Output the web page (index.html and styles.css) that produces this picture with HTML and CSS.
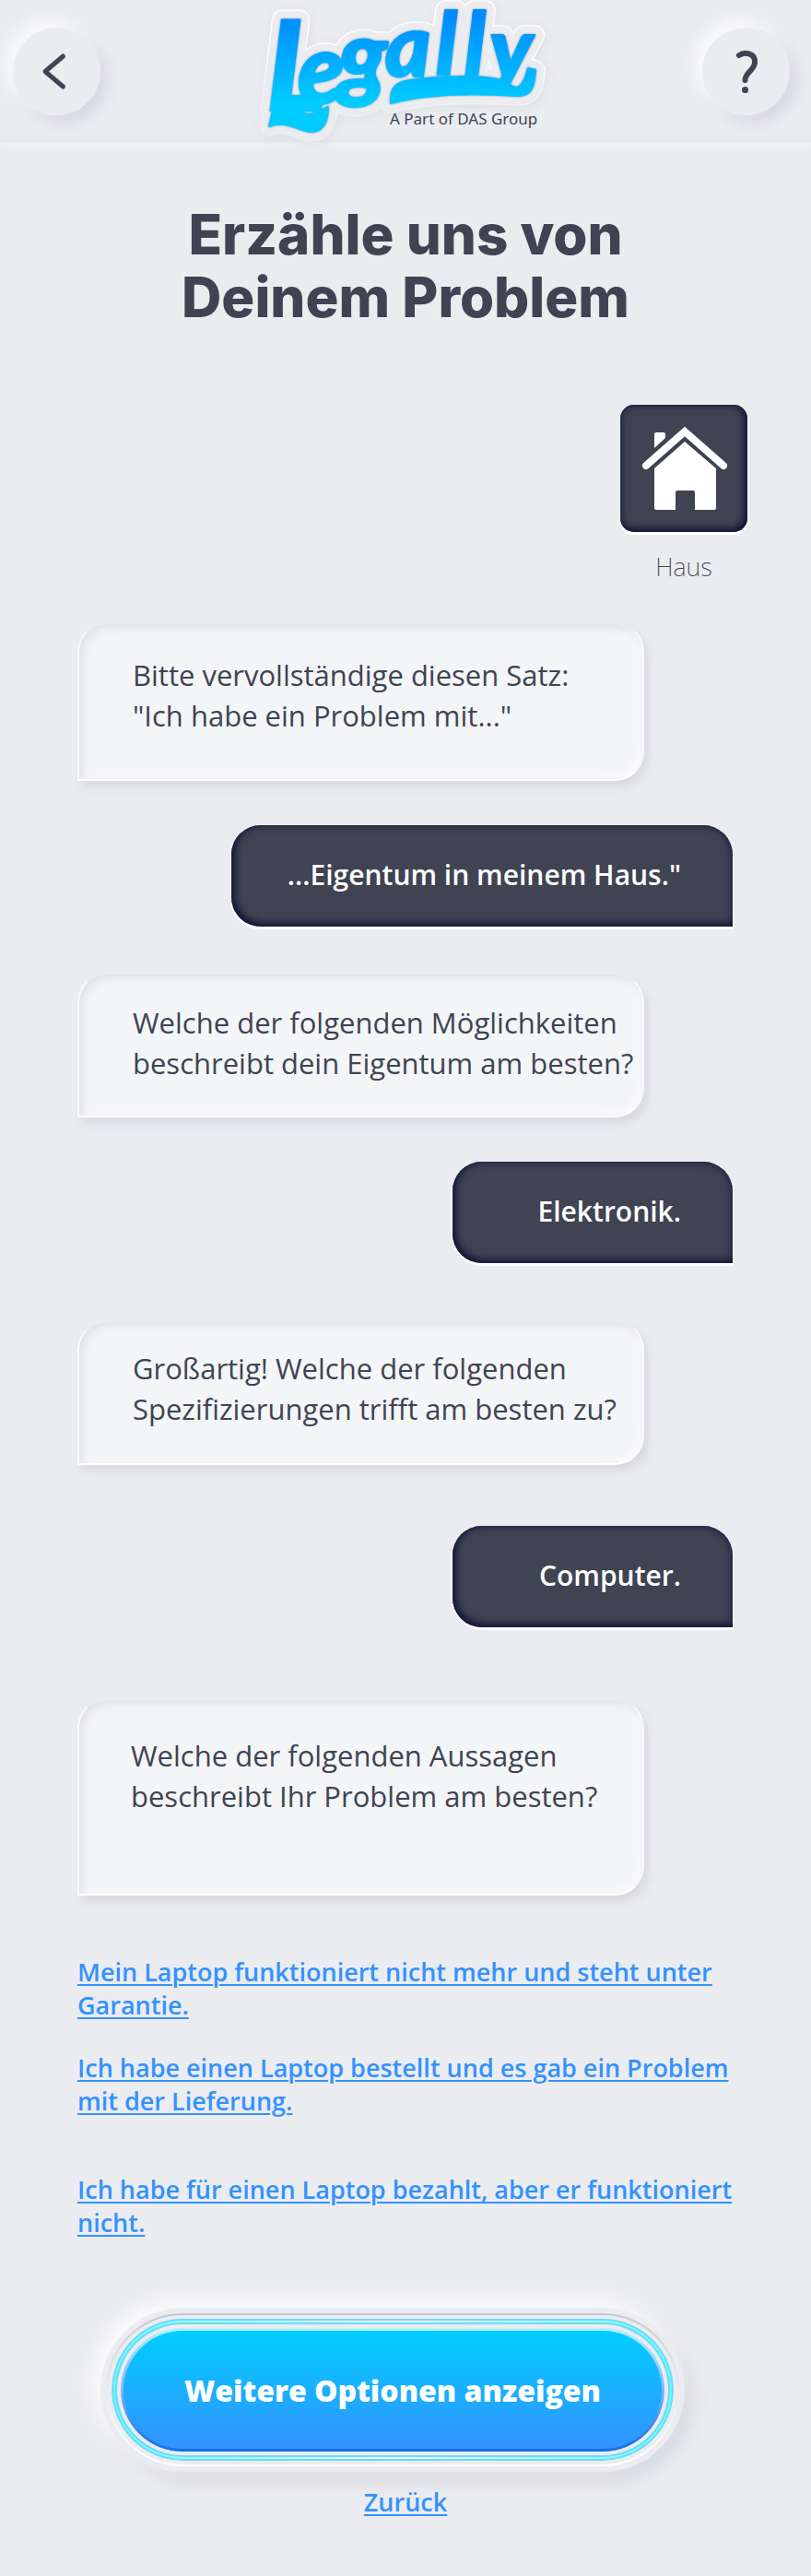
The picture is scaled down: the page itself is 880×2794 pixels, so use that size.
FILE: index.html
```html
<!DOCTYPE html>
<html lang="de">
<head>
<meta charset="utf-8">
<meta name="viewport" content="width=device-width, initial-scale=1">
<title>Legally – Erzähle uns von Deinem Problem</title>
<link rel="stylesheet" href="styles.css">
</head>
<body>
<header class="topbar">
  <button class="round-button" type="button" aria-label="Zurück">
    <svg class="round-icon" viewBox="0 0 95 95" aria-hidden="true"><path class="chevron" d="M54.500 31 L35 47.500 L54.500 64"/></svg>
  </button>
  <svg class="logo" viewBox="0 0 340 150" role="img" aria-label="Legally – A Part of DAS Group">
    <defs>
      <linearGradient id="ink" gradientUnits="userSpaceOnUse" x1="0" y1="18" x2="0" y2="112">
        <stop offset="0" stop-color="#008cff"/><stop offset="1" stop-color="#00ccff"/>
      </linearGradient>
      <linearGradient id="rim" gradientUnits="userSpaceOnUse" x1="0" y1="60" x2="0" y2="135">
        <stop offset="0" stop-color="#fdfdfe"/><stop offset="1" stop-color="#ebecf0"/>
      </linearGradient>
      <g id="mark">
        <text class="mark-text" font-size="136" x="19" y="120">L</text>
        <text class="mark-text" font-size="104" x="53 97" y="112 97">eg</text>
        <text class="mark-text" font-size="94" x="148 203 234 261" y="83 81 81 86">ally</text>
        <path d="M22 137 L27 116 H46 C56 120 58 124 66 124 C76 123 80 118 86 116 C86 134 79 143 68 143 C52 142 42 130 22 137 Z"/>
        <path d="M154 112 C153 96 159 89 175 87 C210 82 250 82 270 86 C282 90 285 95 291 95 C297 93 300 86 303 74 L311 76 C310 96 306 104 292 104 C250 101 200 100 154 112 Z"/>
      </g>
    </defs>
    <use class="mark-rim" href="#mark"/>
    <use class="mark-plate" href="#mark"/>
    <use class="mark-ink" href="#mark"/>
    <text class="tagline" x="153" y="135">A Part of DAS Group</text>
  </svg>
  <button class="round-button" type="button" aria-label="Hilfe">
    <svg class="round-icon" viewBox="0 0 95 95" aria-hidden="true"><path class="question" d="M40 30 C45 26 58 27 57 38 C56 47 46.500 48 46.500 57"/><circle class="question-dot" cx="46.500" cy="67.500" r="3.500"/></svg>
  </button>
</header>

<main class="page">
  <h1 class="title">Erzähle uns von<br>Deinem Problem</h1>

  <figure class="category">
    <div class="tile">
      <svg class="tile-icon" viewBox="0 0 138 138" aria-hidden="true">
        <path class="roof" d="M28 66 L70 29 L112 66"/>
        <path class="walls" d="M70 40 L104 69 V112 Q104 114 102 114 H81 V95 Q81 93 79 93 H62 Q60 93 60 95 V114 H39 Q37 114 37 112 V69 Z"/>
        <path class="walls" d="M37 47 V32 Q37 30 39 30 H47 Q49 30 49 32 V36 Z"/>
      </svg>
    </div>
    <figcaption class="category-name">Haus</figcaption>
  </figure>

  <section class="chat" aria-label="Chat">
    <p class="bubble bubble-first">Bitte vervollständige diesen Satz:<br>"Ich habe ein Problem mit..."</p>
    <p class="reply reply-wide">...Eigentum in meinem Haus."</p>
    <p class="bubble bubble-second">Welche der folgenden Möglichkeiten<br>beschreibt dein Eigentum am besten?</p>
    <p class="reply reply-second">Elektronik.</p>
    <p class="bubble bubble-third">Großartig! Welche der folgenden<br>Spezifizierungen trifft am besten zu?</p>
    <p class="reply reply-third">Computer.</p>
    <p class="bubble bubble-last">Welche der folgenden Aussagen<br>beschreibt Ihr Problem am besten?</p>
  </section>

  <nav class="options" aria-label="Aussagen">
    <a class="link" href="#garantie">Mein Laptop funktioniert nicht mehr und steht unter Garantie.</a>
    <a class="link" href="#lieferung">Ich habe einen Laptop bestellt und es gab ein Problem mit der Lieferung.</a>
    <a class="link link-apart" href="#defekt">Ich habe für einen Laptop bezahlt, aber er funktioniert nicht.</a>
  </nav>

  <div class="actions">
    <button class="more" type="button">
      <span class="more-groove"><span class="more-ring"><span class="more-glow"><span class="more-ring-inner"><span class="more-gap"><span class="more-edge"><span class="more-fill">Weitere Optionen anzeigen</span></span></span></span></span></span></span>
    </button>
    <a class="link back" href="#zurueck">Zurück</a>
  </div>
</main>
</body>
</html>
```
FILE: styles.css
```css
* { box-sizing: border-box; }

body {
  margin: 0;
  background: #ebecf0;
  color: #404352;
  font-family: "Open Sans", "Noto Sans", sans-serif;
}

.topbar {
  display: flex;
  justify-content: space-between;
  align-items: flex-start;
  height: 154px;
  padding: 0 23px 0 14px;
  background: linear-gradient(#ebecf0 146px, #e6e7eb 152px);
  box-shadow: 0 6px 6px #eff0f4;
}

.round-button {
  width: 95px;
  height: 95px;
  margin-top: 30px;
  padding: 0;
  border: 0;
  border-radius: 50%;
  background: #ebecf0;
  box-shadow: -8px -8px 16px #fafbfc, 8px 8px 16px #d6d7de;
}

.round-icon { display: block; width: 100%; }

.chevron, .question {
  fill: none;
  stroke: #404352;
  stroke-width: 5;
  stroke-linecap: round;
  stroke-linejoin: round;
}

.question { stroke-width: 6; }
.question-dot { fill: #404352; }

.logo { flex: none; width: 340px; height: 150px; margin-left: 9px; overflow: visible; }

.mark-text { font-family: Lato, sans-serif; font-weight: 900; font-style: italic; }

.mark-rim {
  fill: url(#rim);
  stroke: url(#rim);
  stroke-width: 22;
  stroke-linejoin: round;
  filter: drop-shadow(2px 2px 5px #dcdde3);
}

.mark-plate {
  fill: #ebecf0;
  stroke: #ebecf0;
  stroke-width: 19;
  stroke-linejoin: round;
}

.mark-ink {
  fill: url(#ink);
  stroke: url(#ink);
  stroke-width: 2;
  stroke-linejoin: round;
  filter: drop-shadow(0 0 1px #6a8fb8);
}

.tagline { fill: #404352; font: 400 17px "Noto Sans", sans-serif; }

.title {
  margin: 66px 0 0;
  font: 800 60px/68px Inter, sans-serif;
  text-align: center;
}

.category {
  display: flex;
  flex-direction: column;
  align-items: center;
  width: 138px;
  margin: 83px 69px 0 auto;
}

.tile {
  width: 138px;
  height: 138px;
  border-radius: 15px;
  background: #404352;
  box-shadow: inset -3px -3px 8px #0d1235, inset 1px 1px 8px #23284a, 0 2px 0 1px #fff;
}

.tile-icon { display: block; width: 100%; }
.roof { fill: none; stroke: #fff; stroke-width: 8; stroke-linecap: round; }
.walls { fill: #fff; }

.category-name { margin-top: 18px; font: 200 27px/40px "Noto Sans", sans-serif; }

.chat {
  display: flex;
  flex-direction: column;
  align-items: flex-start;
  padding: 0 85px 0 84px;
  margin-top: 40px;
}

.bubble {
  width: 615px;
  max-width: 100%;
  margin: 0;
  padding: 33px 0 47px 58px;
  border: 2px solid #fff;
  border-top-color: #ebecf0;
  border-left-color: #f8f9fa;
  border-right-color: #f8f9fb;
  border-radius: 32px 32px 32px 0;
  background: #f4f5f7;
  box-shadow: inset 4px 4px 8px #e0e1e7, inset -4px -4px 8px #fafafb, 5px 7px 10px #d9dae1;
  font-size: 31px;
  line-height: 44px;
}

.bubble-second { margin-top: 50px; padding: 30px 0 35px 58px; }
.bubble-third { margin-top: 62px; padding: 28px 0 37px 58px; }
.bubble-last { margin-top: 77px; padding: 38px 0 84px 56px; }

.reply {
  align-self: flex-end;
  width: 304px;
  max-width: 100%;
  margin: 48px 0 0;
  padding: 32px 56px 34px 0;
  border-radius: 32px 32px 0 32px;
  background: #404352;
  box-shadow: inset 3px -3px 8px #0d1235, inset -1px 1px 8px #23284a, 0 2px 0 1px #fff;
  color: #fff;
  font-size: 30px;
  font-weight: 600;
  line-height: 44px;
  text-align: right;
}

.reply-wide { width: 544px; }
.reply-third { margin-top: 66px; }

.options {
  display: flex;
  flex-direction: column;
  align-items: flex-start;
  gap: 32px;
  padding: 0 84px;
  margin-top: 65px;
}

.link {
  color: #3392ff;
  font-size: 27px;
  font-weight: 600;
  line-height: 36px;
  text-decoration-thickness: 2px;
  text-underline-offset: 3px;
}

.link-apart { margin-top: 28px; }

.actions {
  display: flex;
  flex-direction: column;
  align-items: center;
  margin-top: 74px;
  padding-bottom: 60px;
}

.more {
  width: 634px;
  max-width: 100%;
  margin-right: 28px;
  padding: 6px;
  border: 0;
  border-radius: 90px;
  background: #ebecf0;
  box-shadow: -8px -8px 20px #fcfcfd, 8px 10px 20px #d6d7dd;
}

.more span { display: block; border-radius: 90px; }
.more .more-groove { padding: 2px; background: linear-gradient(#c6c7d2, #ebecf0 50%, #fff); }
.more .more-ring { padding: 2px; border: 4px solid #ebecf0; background: #6cdaf8 padding-box; }
.more .more-glow { padding: 2px; background: linear-gradient(90deg, #66fbff, #90fcff 14%, #f0ffff 50%, #90fcff 86%, #66fbff); }
.more .more-ring-inner { padding: 2px; background: #6cdaf8; }
.more .more-gap { padding: 4px; background: #ebecf0; }
.more .more-edge { padding: 3px; background: linear-gradient(#b5f1fd, #7ab4f5 50%, #0f6fe8); }
.more .more-fill {
  padding: 43px 10px 41px;
  background: linear-gradient(#00ceff, #3392ff);
  color: #fff;
  font: 800 32px/44px "Open Sans", sans-serif;
}

.back { margin-top: 15px; }
```
